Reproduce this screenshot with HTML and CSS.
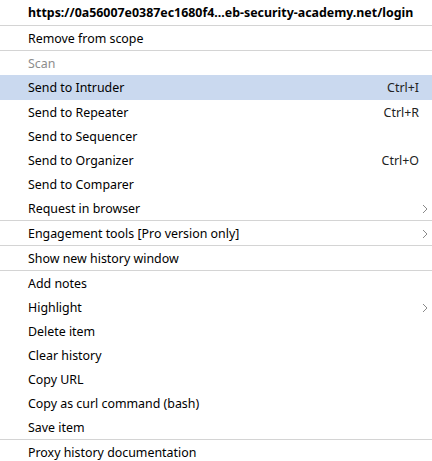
FILE: index.html
```html
<!DOCTYPE html>
<html>
<head>
<meta charset="utf-8">
<link rel="stylesheet" href="styles.css">
</head>
<body>
<div class="menu">
  <div class="item header"><span class="label">https://0a56007e0387ec1680f4...eb-security-academy.net/login</span></div>
  <div class="sep"></div>
  <div class="item"><span class="label">Remove from scope</span></div>
  <div class="sep"></div>
  <div class="item disabled"><span class="label">Scan</span></div>
  <div class="item active"><span class="label">Send to Intruder</span><span class="key">Ctrl+I</span></div>
  <div class="item"><span class="label">Send to Repeater</span><span class="key">Ctrl+R</span></div>
  <div class="item"><span class="label">Send to Sequencer</span></div>
  <div class="item"><span class="label">Send to Organizer</span><span class="key">Ctrl+O</span></div>
  <div class="item"><span class="label">Send to Comparer</span></div>
  <div class="item"><span class="label">Request in browser</span><svg class="chev" width="6" height="10" viewBox="0 0 6 10"><polyline points="1,1 5,5 1,9" fill="none" stroke="#8a8a8a" stroke-width="1"/></svg></div>
  <div class="sep"></div>
  <div class="item"><span class="label">Engagement tools [Pro version only]</span><svg class="chev" width="6" height="10" viewBox="0 0 6 10"><polyline points="1,1 5,5 1,9" fill="none" stroke="#8a8a8a" stroke-width="1"/></svg></div>
  <div class="sep"></div>
  <div class="item"><span class="label">Show new history window</span></div>
  <div class="sep"></div>
  <div class="item"><span class="label">Add notes</span></div>
  <div class="item"><span class="label">Highlight</span><svg class="chev" width="6" height="10" viewBox="0 0 6 10"><polyline points="1,1 5,5 1,9" fill="none" stroke="#8a8a8a" stroke-width="1"/></svg></div>
  <div class="item"><span class="label">Delete item</span></div>
  <div class="item"><span class="label">Clear history</span></div>
  <div class="item"><span class="label">Copy URL</span></div>
  <div class="item"><span class="label">Copy as curl command (bash)</span></div>
  <div class="item"><span class="label">Save item</span></div>
  <div class="sep"></div>
  <div class="item"><span class="label">Proxy history documentation</span></div>
</div>
</body>
</html>
```
FILE: styles.css
```css
html, body {
  margin: 0;
  padding: 0;
  background: #ffffff;
}
body {
  font-family: "Noto Sans", "Open Sans", sans-serif;
  font-size: 12.4px;
  color: #000000;
  width: 432px;
  height: 461px;
  overflow: hidden;
}
.menu {
  display: flex;
  flex-direction: column;
}
.item {
  height: 24px;
  display: flex;
  align-items: center;
  padding-left: 28px;
  padding-right: 13px;
  position: relative;
}
.item .label {
  flex: 1;
  white-space: nowrap;
}
.header {
  height: 25px;
  font-weight: bold;
}
.disabled {
  color: #8c8c8c;
}
.active {
  height: 25px;
  background: #cad9ef;
}
.key {
  color: #222222;
}
.chev {
  position: absolute;
  right: 4px;
  top: 8px;
}
.sep {
  height: 1px;
  background: #d4d4d4;
}
```
